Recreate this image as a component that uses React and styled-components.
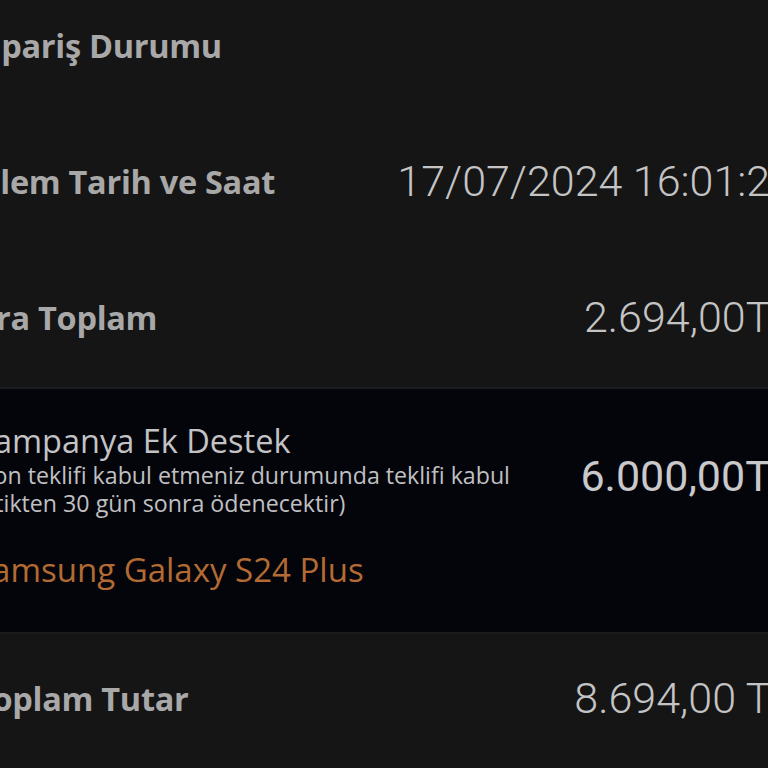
import React from "react";
import styled, { createGlobalStyle } from "styled-components";

const Global = createGlobalStyle`
  html, body {
    margin: 0;
    padding: 0;
    background: #151516;
    overflow: hidden;
    width: 768px;
    height: 768px;
  }
  #root { width: 768px; height: 768px; overflow: hidden; }
`;

const Sheet = styled.div`
  width: 820px;
  margin-left: -26px;
  margin-top: -23px;
  display: flex;
  flex-direction: column;
  background: #151516;
  font-family: "Open Sans", "Noto Sans", sans-serif;
`;

const Row = styled.div`
  height: ${(p) => p.$h || 136}px;
  display: flex;
  align-items: center;
  justify-content: space-between;
  background: #151516;
`;

const Label = styled.div`
  font-weight: 700;
  font-size: 32.5px;
  color: #a8a8a9;
  letter-spacing: -0.3px;
  white-space: nowrap;
`;

const Value = styled.div`
  font-family: Roboto, "Open Sans", sans-serif;
  font-weight: 300;
  font-size: 43px;
  color: #c4c4c5;
  white-space: nowrap;
`;

const Divider = styled.div`
  height: 2px;
  margin-top: ${(p) => p.$mt || 0}px;
  background: ${(p) => p.$c};
`;

const Campaign = styled.div`
  background: #04050b;
  height: 243px;
  display: flex;
  align-items: flex-start;
  justify-content: space-between;
  box-sizing: border-box;
  padding-top: 32px;
`;

const CampaignText = styled.div`
  display: flex;
  flex-direction: column;
`;

const CampaignTitle = styled.div`
  font-size: 32.5px;
  color: #c3c3c5;
  line-height: 40px;
  white-space: nowrap;
`;

const Note = styled.div`
  font-size: 23.2px;
  color: #c0c0c2;
  line-height: 28px;
  white-space: nowrap;
`;

const Product = styled.div`
  margin-top: 31px;
  font-size: 33px;
  color: #b36b33;
  line-height: 44px;
  white-space: nowrap;
`;

const Amount = styled.div`
  margin-top: 30px;
  font-family: Roboto, "Open Sans", sans-serif;
  font-weight: 400;
  font-size: 43px;
  color: #c9c9cb;
  white-space: nowrap;
`;

export default function App() {
  return (
    <>
      <Global />
      <Sheet>
        <Row>
          <Label>Sipariş Durumu</Label>
        </Row>
        <Row>
          <Label>İşlem Tarih ve Saat</Label>
          <Value>17/07/2024 16:01:24</Value>
        </Row>
        <Row>
          <Label>Ara Toplam</Label>
          <Value>2.694,00TL</Value>
        </Row>
        <Divider $mt={2} $c="#1b1c1f" />
        <Campaign>
          <CampaignText>
            <CampaignTitle>Kampanya Ek Destek</CampaignTitle>
            <Note>(Son teklifi kabul etmeniz durumunda teklifi kabul</Note>
            <Note>ettikten 30 gün sonra ödenecektir)</Note>
            <Product>Samsung Galaxy S24 Plus</Product>
          </CampaignText>
          <Amount>6.000,00TL</Amount>
        </Campaign>
        <Divider $c="#1a1b1d" />
        <Row $h={128}>
          <Label>Toplam Tutar</Label>
          <Value>8.694,00 TL</Value>
        </Row>
      </Sheet>
    </>
  );
}
